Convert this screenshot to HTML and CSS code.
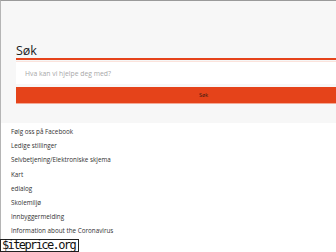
FILE: index.html
```html
<!DOCTYPE html>
<html lang="no">
<head>
    <meta charset="UTF-8">
    <meta name="viewport" content="width=device-width, initial-scale=1.0">
    <title>Søk</title>
    <link rel="stylesheet" href="styles.css">
</head>
<body>
    <div class="page">
        <section class="search-panel">
            <h2 class="search-title">Søk</h2>
            <form class="search-form">
                <input type="text" class="search-input" placeholder="Hva kan vi hjelpe deg med?">
                <button type="submit" class="search-btn">Søk</button>
            </form>
        </section>

        <ul class="quick-links">
            <li><a href="#">Følg oss på Facebook</a></li>
            <li><a href="#">Ledige stillinger</a></li>
            <li><a href="#">Selvbetjening/Elektroniske skjema</a></li>
            <li><a href="#">Kart</a></li>
            <li><a href="#">edialog</a></li>
            <li><a href="#">Skolemiljø</a></li>
            <li><a href="#">Innbyggermelding</a></li>
            <li><a href="#">Information about the Coronavirus</a></li>
        </ul>
    </div>

    <div class="watermark">$iteprice.org</div>
</body>
</html>
```

FILE: styles.css
```css
:root {
    --color-primary: #e5431a;
    --color-panel: #f7f7f7;
    --color-text: #333333;
    --color-border: #9a9a9a;
}

body {
    font-family: 'Open Sans', sans-serif;
    margin: 0;
    padding: 0;
    background-color: white;
    color: var(--color-text);
    overflow: hidden;
    height: 252px;
}

.page {
    border-top: 1px solid var(--color-border);
    border-left: 1px solid #b5b5b5;
    height: 251px;
}

.search-panel {
    background-color: var(--color-panel);
    padding: 44px 0 22px 15px;
    height: 56px;
}

.search-title {
    margin: 0;
    font-size: 12.5px;
    font-weight: normal;
    line-height: 12px;
    color: #222;
    border-bottom: 2px solid var(--color-primary);
    padding-bottom: 1px;
}

.search-form {
    margin-top: 1px;
}

.search-input {
    display: block;
    width: 100%;
    box-sizing: border-box;
    height: 23px;
    border: none;
    border-top: 1px solid #fbe3dc;
    background-color: white;
    padding: 0 9px;
    font-family: 'Open Sans', sans-serif;
    font-size: 6.8px;
    color: #999;
}

.search-input::placeholder {
    color: #a8a8a8;
}

.search-btn {
    display: block;
    width: 100%;
    height: 17px;
    margin-top: 3px;
    background-color: var(--color-primary);
    border: none;
    border-bottom: 1px solid #f3a995;
    color: #3a1a10;
    font-family: 'Open Sans', sans-serif;
    font-size: 5.5px;
    padding: 0 0 0 55px;
}

.quick-links {
    list-style: none;
    margin: 0;
    padding: 2px 0 0 10px;
}

.quick-links li {
    line-height: 14.2px;
    font-size: 6.3px;
}

.quick-links a {
    color: var(--color-text);
    text-decoration: none;
}

.watermark {
    position: absolute;
    left: 0;
    bottom: 0;
    background-color: white;
    border: 1px solid #222;
    font-family: 'DejaVu Sans Mono', monospace;
    font-size: 12px;
    letter-spacing: -1.6px;
    line-height: 11px;
    padding: 0 3px 0 1px;
    color: #111;
}
```
